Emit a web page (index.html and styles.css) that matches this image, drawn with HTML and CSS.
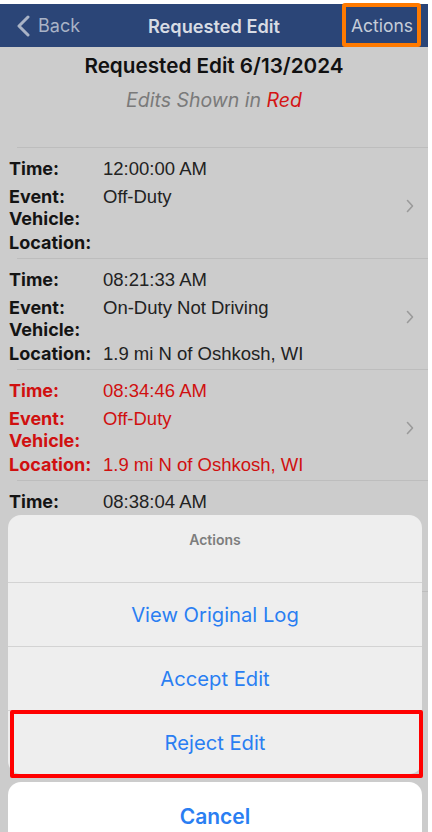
FILE: index.html
```html
<!DOCTYPE html>
<html>
<head>
<meta charset="utf-8">
<link rel="stylesheet" href="styles.css">
</head>
<body>
<div class="screen">
  <div class="topgap"></div>
  <header class="nav">
    <div class="back">
      <svg class="back-chev" width="14" height="22" viewBox="0 0 14 22"><path d="M12 2 L3 11 L12 20" fill="none" stroke="currentColor" stroke-width="3" stroke-linecap="round" stroke-linejoin="round"/></svg>
      <span>Back</span>
    </div>
    <div class="nav-title">Requested Edit</div>
    <div class="nav-action">Actions</div>
  </header>

  <section class="heading">
    <div class="heading-title">Requested Edit 6/13/2024</div>
    <div class="heading-sub">Edits Shown in <span class="red">Red</span></div>
  </section>

  <div class="list">
    <div class="row">
      <div class="fields">
        <div class="line l-time"><span class="lab">Time:</span><span class="val">12:00:00 AM</span></div>
        <div class="line"><span class="lab">Event:</span><span class="val">Off-Duty</span></div>
        <div class="line l-veh"><span class="lab">Vehicle:</span><span class="val"></span></div>
        <div class="line"><span class="lab">Location:</span><span class="val"></span></div>
      </div>
      <svg class="chev" width="8" height="14" viewBox="0 0 8 14"><path d="M1.5 1.5 L6.5 7 L1.5 12.5" fill="none" stroke="currentColor" stroke-width="1.6" stroke-linecap="round" stroke-linejoin="round"/></svg>
    </div>
    <div class="row">
      <div class="fields">
        <div class="line l-time"><span class="lab">Time:</span><span class="val">08:21:33 AM</span></div>
        <div class="line"><span class="lab">Event:</span><span class="val">On-Duty Not Driving</span></div>
        <div class="line l-veh"><span class="lab">Vehicle:</span><span class="val"></span></div>
        <div class="line"><span class="lab">Location:</span><span class="val">1.9 mi N of Oshkosh, WI</span></div>
      </div>
      <svg class="chev" width="8" height="14" viewBox="0 0 8 14"><path d="M1.5 1.5 L6.5 7 L1.5 12.5" fill="none" stroke="currentColor" stroke-width="1.6" stroke-linecap="round" stroke-linejoin="round"/></svg>
    </div>
    <div class="row edited">
      <div class="fields">
        <div class="line l-time"><span class="lab">Time:</span><span class="val">08:34:46 AM</span></div>
        <div class="line"><span class="lab">Event:</span><span class="val">Off-Duty</span></div>
        <div class="line l-veh"><span class="lab">Vehicle:</span><span class="val"></span></div>
        <div class="line"><span class="lab">Location:</span><span class="val">1.9 mi N of Oshkosh, WI</span></div>
      </div>
      <svg class="chev" width="8" height="14" viewBox="0 0 8 14"><path d="M1.5 1.5 L6.5 7 L1.5 12.5" fill="none" stroke="currentColor" stroke-width="1.6" stroke-linecap="round" stroke-linejoin="round"/></svg>
    </div>
    <div class="row">
      <div class="fields">
        <div class="line l-time"><span class="lab">Time:</span><span class="val">08:38:04 AM</span></div>
        <div class="line"><span class="lab">Event:</span><span class="val">Driving</span></div>
        <div class="line l-veh"><span class="lab">Vehicle:</span><span class="val"></span></div>
        <div class="line"><span class="lab">Location:</span><span class="val">1.9 mi N of Oshkosh, WI</span></div>
      </div>
    </div>
  </div>

  <div class="sheet-wrap">
    <div class="sheet">
      <div class="sheet-title">Actions</div>
      <div class="sheet-btn">View Original Log</div>
      <div class="sheet-btn">Accept Edit</div>
      <div class="sheet-btn last">Reject Edit</div>
    </div>
    <div class="cancel">Cancel</div>
    <div class="highlight-red"></div>
  </div>
  <div class="highlight-orange"></div>
</div>
</body>
</html>
```

FILE: styles.css
```css
* { box-sizing: border-box; }
html, body {
  margin: 0;
  padding: 0;
  background: #ffffff;
}
body {
  width: 432px;
  height: 832px;
  overflow: hidden;
  font-family: "Inter", "Liberation Sans", sans-serif;
}
.screen {
  position: relative;
  width: 428px;
  height: 832px;
  background: #cccccc;
  overflow: hidden;
}
.topgap {
  height: 4px;
  background: #ffffff;
}
.nav {
  height: 43px;
  background: #2b4577;
  display: flex;
  align-items: center;
  position: relative;
}
.back {
  display: flex;
  align-items: center;
  gap: 8px;
  padding-left: 16px;
  color: #a9b3c6;
  font-size: 18px;
}
.back-chev { color: #a9b3c6; }
.nav-title {
  position: absolute;
  left: 0;
  right: 0;
  text-align: center;
  color: #d8dce4;
  font-size: 18.2px;
  font-weight: 600;
  pointer-events: none;
}
.nav-action {
  margin-left: auto;
  margin-right: 15px;
  color: #c6cdd9;
  font-size: 17.5px;
}
.highlight-orange {
  position: absolute;
  left: 342px;
  top: 3px;
  width: 79px;
  height: 44px;
  border: 4px solid #ff7a00;
  border-radius: 3px;
}
.heading {
  height: 100px;
  text-align: center;
  padding-top: 7px;
}
.heading-title {
  font-size: 20.7px;
  font-weight: 600;
  color: #111111;
  line-height: 24px;
}
.heading-sub {
  margin-top: 10px;
  font-size: 19.5px;
  font-style: italic;
  color: #7a7a7a;
  line-height: 24px;
}
.red { color: #d41414; }
.list {
  border-top: 1px solid #bdbdbd;
  margin-left: 17px;
}
.row {
  margin-left: -17px;
  display: flex;
  align-items: center;
  padding: 9px 0 5px 9px;
  position: relative;
  height: 111px;
}
.row::after {
  content: "";
  position: absolute;
  left: 17px;
  right: 0;
  bottom: 0;
  height: 1px;
  background: #bdbdbd;
}
.fields { flex: 1; }
.line {
  display: flex;
  height: 22px;
  line-height: 22px;
  color: #141414;
}
.l-time { margin-bottom: 6px; }
.l-veh { margin-bottom: 2px; }
.lab {
  width: 94px;
  flex: none;
  font-weight: 700;
  font-family: "Inter", sans-serif;
  font-size: 18px;
}
.val {
  font-family: "Liberation Sans", "Inter", sans-serif;
  font-size: 18.5px;
  color: #222222;
}
.edited .lab, .edited .val { color: #d01010; }
.chev {
  color: #9a9a9a;
  margin-right: 14px;
}
.sheet-wrap {
  position: absolute;
  left: 8px;
  top: 515px;
  width: 414px;
}
.sheet {
  background: #eeeeee;
  border-radius: 13px;
  overflow: hidden;
}
.sheet-title {
  height: 68px;
  padding-top: 16px;
  text-align: center;
  font-size: 14px;
  font-weight: 600;
  color: #7d7d7d;
  border-bottom: 1px solid #d3d3d3;
}
.sheet-btn {
  height: 64px;
  display: flex;
  align-items: center;
  justify-content: center;
  font-size: 20.2px;
  color: #2a7ef2;
  border-bottom: 1px solid #d3d3d3;
}
.sheet-btn.last { border-bottom: none; height: 63px; }
.cancel {
  margin-top: 8px;
  background: #ffffff;
  border-radius: 13px;
  height: 66px;
  padding-top: 2px;
  display: flex;
  align-items: center;
  justify-content: center;
  font-size: 21px;
  font-weight: 600;
  color: #2a7ef2;
}
.highlight-red {
  position: absolute;
  left: 2px;
  top: 195px;
  width: 413px;
  height: 68px;
  border: 4px solid #ff0000;
  border-radius: 2px;
}
```
